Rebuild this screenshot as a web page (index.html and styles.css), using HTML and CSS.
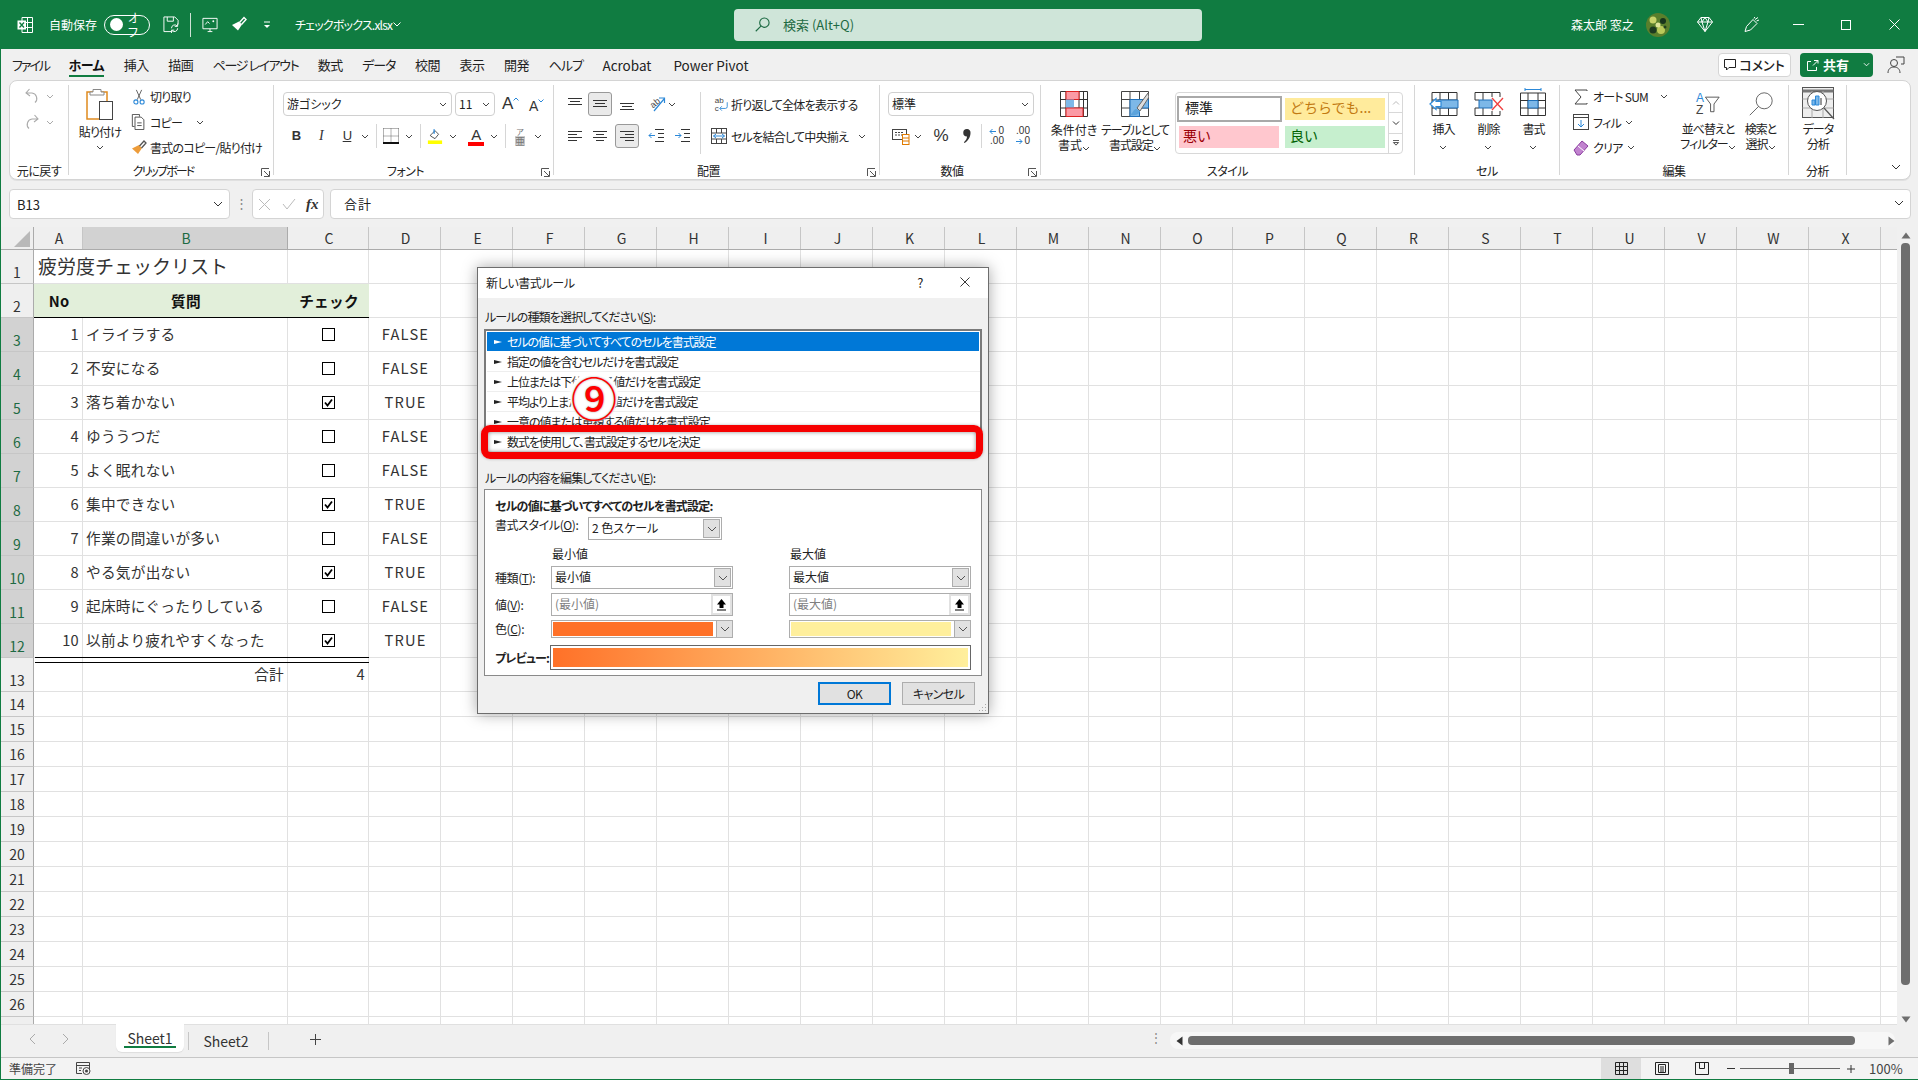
FILE: index.html
```html
<!DOCTYPE html>
<html lang="ja">
<head>
<meta charset="utf-8">
<title>チェックボックス.xlsx - Excel</title>
<link rel="stylesheet" href="styles.css">
</head>
<body>
<svg class="sprite" aria-hidden="true">
  <symbol id="chev" viewBox="0 0 8 5"><path d="M1 1l3 3 3-3" fill="none" stroke="currentColor" stroke-width="1"/></symbol>
  <symbol id="launch" viewBox="0 0 9 9"><path d="M.5 8V.5H8M8.500 8.500H3M8.500 8.500V3M3 3l5 5" fill="none" stroke="#555" stroke-width="1"/></symbol>
  <symbol id="up-btn" viewBox="0 0 11 13"><path d="M5.500 1L10 6.500H7.500V10h-4V6.500H1z" fill="#000"/><path d="M1 12h9" stroke="#000"/></symbol>
  <symbol id="combo" viewBox="0 0 10 6"><path d="M1 1l4 4 4-4" fill="none" stroke="#555"/></symbol>
  <symbol id="chk" viewBox="0 0 13 13"><rect x=".5" y=".5" width="12" height="12" fill="#fff" stroke="#000"/></symbol>
  <symbol id="chkd" viewBox="0 0 13 13"><rect x=".5" y=".5" width="12" height="12" fill="#fff" stroke="#000"/><path d="M3 6.500l2.500 3L10 3.500" fill="none" stroke="#000" stroke-width="1.800"/></symbol>
</svg>

<div class="app">
  <header class="titlebar">
    <svg class="xl-logo" viewBox="0 0 16 16"><path d="M5 .5h10.500v15H5z" fill="none" stroke="#fff"/><path d="M5 5.500h10.500M5 10.500h10.500M10.500 .5v15" stroke="#fff"/><rect x=".5" y="3.500" width="8.500" height="9" fill="#fff"/><path d="M2.500 5.500l4.500 5M7 5.500l-4.500 5" stroke="#107c41" stroke-width="1.300"/></svg>
    <span class="tb-text autosave">自動保存</span>
    <span class="toggle"><span class="toggle-knob"></span><span class="toggle-text">オフ</span></span>
    <svg class="tb-ic save" viewBox="0 0 16 18"><path d="M.5 1h11.500l3.500 3.500V9M.5 1v15.500H8M4 1v4.500h6.500V1" fill="none" stroke="#fff"/><path d="M8.500 13a3.500 3.500 0 0 1 6-2.500M15 13a3.500 3.500 0 0 1-6 2.500" fill="none" stroke="#fff"/><path d="M15 8v3h-3M8.500 18v-3h3" fill="none" stroke="#fff"/></svg>
    <span class="tb-sep"></span>
    <svg class="tb-ic touch" viewBox="0 0 16 18"><path d="M.5 2.500h15v11H.5zM5.500 16.500h5M8 13.500v3" fill="none" stroke="#fff"/><path d="M3 9l2.500-3 2 2" fill="none" stroke="#fff"/><circle cx="11.500" cy="5.500" r="1" fill="#fff"/></svg>
    <svg class="tb-ic brush" viewBox="0 0 16 16"><path d="M1 8.500L7 14l4-6-3-3z" fill="#fff"/><path d="M8.500 6l4.500-5 2 2-4.500 5" fill="none" stroke="#fff" stroke-width="1.400"/></svg>
    <svg class="tb-qat" viewBox="0 0 8 8"><path d="M1 1h6" stroke="#fff"/><path d="M1 4l3 3 3-3z" fill="#fff"/></svg>
    <span class="tb-text filename">チェックボックス.xlsx</span>
    <svg class="tb-chev" viewBox="0 0 8 5"><path d="M.5 .5L4 4 7.500 .5" fill="none" stroke="#fff"/></svg>
    <div class="search">
      <svg class="search-ic" viewBox="0 0 16 16"><circle cx="10" cy="6" r="5" fill="none" stroke="#1d6a43" stroke-width="1.200"/><path d="M6.300 9.700L.8 15.200" stroke="#1d6a43" stroke-width="1.200"/></svg>
      <span>検索 (Alt+Q)</span>
    </div>
    <span class="tb-text username">森太郎 窓之</span>
    <svg class="avatar" viewBox="0 0 24 24"><circle cx="12" cy="12" r="12" fill="#5a7f2c"/><circle cx="7" cy="7" r="3.500" fill="#c8d36a"/><circle cx="17" cy="8" r="3" fill="#18351c"/><circle cx="15" cy="17" r="4" fill="#b9c95a"/><circle cx="7" cy="17" r="3.500" fill="#1d3a20"/><circle cx="12" cy="12" r="2.500" fill="#dfe59a"/><circle cx="19" cy="14" r="1.500" fill="#20401f"/></svg>
    <svg class="tb-ic diamond" viewBox="0 0 16 16"><path d="M4 1h8l3.500 4.500L8 15 .5 5.500zM.5 5.500h15M5 5.500L8 15l3-9.500M4 1l1 4.500L8 1l3 4.500L12 1" fill="none" stroke="#fff"/></svg>
    <svg class="tb-ic pen" viewBox="0 0 16 16"><path d="M1 15l1.500-5L9 3l4 4-6.500 6.500zM10 2l.8-1.500M12.500 4.500L15 3.500M11 3l3-2" fill="none" stroke="#fff"/></svg>
    <svg class="win-min" viewBox="0 0 11 1"><path d="M0 .5h11" stroke="#fff"/></svg>
    <svg class="win-max" viewBox="0 0 10 10"><rect x=".5" y=".5" width="9" height="9" fill="none" stroke="#fff"/></svg>
    <svg class="win-close" viewBox="0 0 11 11"><path d="M.5 .5l10 10M10.500 .5l-10 10" stroke="#fff"/></svg>
  </header>

  <nav class="tabs">
    <span class="tab kana file">ファイル</span>
    <span class="tab active">ホーム</span>
    <span class="tab">挿入</span>
    <span class="tab">描画</span>
    <span class="tab kana page">ページ レイアウト</span>
    <span class="tab">数式</span>
    <span class="tab kana">データ</span>
    <span class="tab">校閲</span>
    <span class="tab">表示</span>
    <span class="tab">開発</span>
    <span class="tab kana">ヘルプ</span>
    <span class="tab lat">Acrobat</span>
    <span class="tab lat">Power Pivot</span>
    <span class="btn-comment"><svg viewBox="0 0 12 12"><path d="M.5 .5h11v8H5L2.500 11V8.500h-2z" fill="none" stroke="#222"/></svg>コメント</span>
    <span class="btn-share"><svg viewBox="0 0 12 12"><path d="M7 1.500h4v3M11 1.500L6 6.500M4 2.500H.5v9h9V8" fill="none" stroke="#fff"/></svg>共有<svg class="share-chev" viewBox="0 0 8 5"><path d="M1 1l3 3 3-3" fill="none" stroke="#fff"/></svg></span>
    <svg class="person" viewBox="0 0 18 18"><circle cx="7" cy="7" r="3.500" fill="none" stroke="#444"/><path d="M1 17c0-4 2.500-6 6-6s6 2 6 6" fill="none" stroke="#444"/><path d="M9 1h8v7h-3" fill="none" stroke="#444"/></svg>
  </nav>

  <section class="ribbon">
    <div class="group g-undo">
      <div class="g-body col">
        <div class="row undo-row">
          <svg class="i14" viewBox="0 0 14 16"><path d="M4.500 1L1 5l4 3M1 5h6a5.500 5.500 0 0 1 3 9.500" fill="none" stroke="#aaa" stroke-width="1.100"/></svg>
          <svg class="chev8 ml7 dim"><use href="#chev"/></svg>
        </div>
        <div class="row undo-row">
          <svg class="i14" viewBox="0 0 14 16"><path d="M9.500 1L13 5 9 8M13 5H7a5.500 5.500 0 0 0-3 9.500" fill="none" stroke="#aaa" stroke-width="1.100"/></svg>
          <svg class="chev8 ml7 dim"><use href="#chev"/></svg>
        </div>
      </div>
      <div class="g-label">元に戻す</div>
    </div>

    <div class="group g-clip">
      <div class="g-body">
        <div class="paste">
          <svg class="paste-ic" viewBox="0 0 28 32"><rect x="1" y="4" width="20" height="27" fill="#fff" stroke="#e08a1e" stroke-width="1.500"/><path d="M7 4V1.500h8V4h3v3H4V4z" fill="#fff" stroke="#888"/><rect x="13.500" y="13.500" width="13" height="18" fill="#fff" stroke="#444"/></svg>
          <span class="paste-label">貼り付け</span>
          <svg class="chev8 paste-chev"><use href="#chev"/></svg>
        </div>
        <div class="clip-list">
          <div class="row clip-row"><svg class="i16" viewBox="0 0 16 18"><path d="M5 1l5 11M11 1L6 12" fill="none" stroke="#555"/><circle cx="4.500" cy="14.500" r="2.300" fill="none" stroke="#2b88d8" stroke-width="1.200"/><circle cx="11.500" cy="14.500" r="2.300" fill="none" stroke="#2b88d8" stroke-width="1.200"/></svg><span class="ml3">切り取り</span></div>
          <div class="row clip-row"><svg class="i16" viewBox="0 0 16 18"><path d="M3 14H.5V.5h8V3" fill="none" stroke="#444"/><path d="M3.500 3.500h7l3 3v11h-10zM6 10h5M6 13h5" fill="none" stroke="#444"/></svg><span class="ml3">コピー</span><svg class="chev8 ml14"><use href="#chev"/></svg></div>
          <div class="row clip-row"><svg class="i16" viewBox="0 0 16 16"><path d="M1 8.500L7 14l4-6-3-3z" fill="#ed9c3a"/><path d="M8.500 6l4.500-5 2 2-4.500 5" fill="none" stroke="#555" stroke-width="1.300"/></svg><span class="ml3">書式のコピー/貼り付け</span></div>
        </div>
      </div>
      <div class="g-label launchable tight">クリップボード<svg class="launch"><use href="#launch"/></svg></div>
    </div>

    <div class="group g-font">
      <div class="g-body col">
        <div class="row rb-row1 pl9">
          <div class="select w169"><span>游ゴシック</span><svg class="chev8"><use href="#chev"/></svg></div>
          <div class="select w40 ml3"><span>11</span><svg class="chev8"><use href="#chev"/></svg></div>
          <span class="grow-a ml7">A<svg viewBox="0 0 6 4"><path d="M.5 3.500L3 1l2.500 2.500" fill="none" stroke="#2b88d8"/></svg></span>
          <span class="grow-a small ml11">A<svg viewBox="0 0 6 4"><path d="M.5 .5L3 3l2.500-2.500" fill="none" stroke="#2b88d8"/></svg></span>
        </div>
        <div class="row rb-row2 pl9">
          <b class="fmt ml7">B</b>
          <i class="fmt ml13">I</i>
          <u class="fmt ml14">U</u>
          <svg class="chev8 ml8"><use href="#chev"/></svg>
          <span class="vsep ml7"></span>
          <svg class="i16 ml6" viewBox="0 0 16 16"><path d="M.5 .5h15M.5 8h15M.5 .5v15M8 .5v15M15.500 .5v15" stroke="#666" stroke-dasharray="1 1" fill="none"/><path d="M0 15h16" stroke="#111" stroke-width="2"/></svg>
          <svg class="chev8 ml6"><use href="#chev"/></svg>
          <span class="vsep ml7"></span>
          <svg class="i16 ml6" viewBox="0 0 16 18"><path d="M3 8l5-5 4 4-4 5-5-3z" fill="none" stroke="#444"/><path d="M7 1.500v5" stroke="#2b88d8" stroke-width="1.500"/><rect y="14" width="16" height="4" fill="#ffff00"/></svg>
          <svg class="chev8 ml6"><use href="#chev"/></svg>
          <span class="color-a ml11">A</span>
          <svg class="chev8 ml6"><use href="#chev"/></svg>
          <span class="vsep ml7"></span>
          <span class="phon ml9">ア<em>亜</em></span>
          <svg class="chev8 ml9"><use href="#chev"/></svg>
        </div>
      </div>
      <div class="g-label launchable">フォント<svg class="launch"><use href="#launch"/></svg></div>
    </div>

    <div class="group g-align">
      <div class="g-body col">
        <div class="row rb-row1 pl9">
          <span class="tbtn"><svg class="i14" viewBox="0 0 14 14"><path d="M0 1.500h14M2 4.500h10M0 7.500h14" stroke="#333"/></svg></span>
          <span class="tbtn on ml1"><svg class="i14" viewBox="0 0 14 14"><path d="M0 3.500h14M2 6.500h10M0 9.500h14" stroke="#333"/></svg></span>
          <span class="tbtn ml3"><svg class="i14" viewBox="0 0 14 14"><path d="M0 6.500h14M2 9.500h10M0 12.500h14" stroke="#333"/></svg></span>
          <svg class="i18 ml10" viewBox="0 0 18 18"><text x="1" y="11" class="svg-ab" transform="rotate(-40 6 8)">ab</text><path d="M5 16L15 4M10 3h5.500v5" fill="none" stroke="#2b88d8" stroke-width="1.200"/></svg>
          <svg class="chev8 ml1"><use href="#chev"/></svg>
          <span class="vsep tall ml24"></span>
          <svg class="i16 ml12" viewBox="0 0 16 18"><text x="1" y="8" class="svg-ab">ab</text><text x="1" y="17" class="svg-ab">c</text><path d="M15 7v5a2 2 0 0 1-2 2H7M9 11.500L6.500 14 9 16.500" fill="none" stroke="#2b88d8"/></svg>
          <span class="ml2">折り返して全体を表示する</span>
        </div>
        <div class="row rb-row2 pl9">
          <span class="tbtn"><svg class="i14" viewBox="0 0 14 14"><path d="M0 2.500h14M0 5.500h9M0 8.500h14M0 11.500h9" stroke="#333"/></svg></span>
          <span class="tbtn ml1"><svg class="i14" viewBox="0 0 14 14"><path d="M0 2.500h14M3 5.500h8M0 8.500h14M3 11.500h8" stroke="#333"/></svg></span>
          <span class="tbtn on ml3"><svg class="i14" viewBox="0 0 14 14"><path d="M0 2.500h14M5 5.500h9M0 8.500h14M5 11.500h9" stroke="#333"/></svg></span>
          <svg class="i16 ml9" viewBox="0 0 16 14"><path d="M7 .5h9M10 4.500h6M10 8.500h6M7 12.500h9" stroke="#333"/><path d="M7 6.500H1M3.500 4L1 6.500 3.500 9" fill="none" stroke="#2b88d8"/></svg>
          <svg class="i16 ml10" viewBox="0 0 16 14"><path d="M7 .5h9M10 4.500h6M10 8.500h6M7 12.500h9" stroke="#333"/><path d="M1 6.500h6M4.500 4L7 6.500 4.500 9" fill="none" stroke="#2b88d8"/></svg>
          <span class="vspace ml10"></span>
          <svg class="i16 ml10" viewBox="0 0 16 16"><rect x=".5" y=".5" width="15" height="15" fill="none" stroke="#444"/><path d="M.5 5h15M.5 11h15M5.500 .5V5M10.500 .5V5M5.500 11v4.500M10.500 11v4.500" stroke="#444"/><path d="M2.500 8h11M5 6l-2.500 2L5 10M11 6l2.500 2L11 10" fill="none" stroke="#2b88d8"/></svg>
          <span class="ml4 w116">セルを結合して中央揃え</span>
          <svg class="chev8 ml11"><use href="#chev"/></svg>
        </div>
      </div>
      <div class="g-label launchable">配置<svg class="launch"><use href="#launch"/></svg></div>
    </div>

    <div class="group g-num">
      <div class="g-body col">
        <div class="row rb-row1 pl8">
          <div class="select w146"><span>標準</span><svg class="chev8"><use href="#chev"/></svg></div>
        </div>
        <div class="row rb-row2 pl8">
          <svg class="i18 ml4" viewBox="0 0 18 18"><rect x=".5" y="2.500" width="14" height="10" fill="none" stroke="#444"/><path d="M3 5.500h9M3 8h9" stroke="#444" stroke-dasharray="2 1"/><rect x="10.500" y="7.500" width="6.500" height="10" fill="#fff" stroke="#e07b00"/><path d="M11 11h6M11 14h6" stroke="#e07b00"/></svg>
          <svg class="chev8 ml4"><use href="#chev"/></svg>
          <span class="pct ml9">%</span>
          <svg class="comma ml11" viewBox="0 0 10 16"><path d="M5 1a3.500 3.500 0 0 1 3.500 4C8.500 9 6 13 2.500 15l-.6-.8C4 12.500 5 10.500 5 8.500A3.700 3.700 0 1 1 5 1z" fill="#333"/></svg>
          <span class="vsep ml9"></span>
          <span class="dec ml6"><span class="dec-row"><svg viewBox="0 0 8 7"><path d="M7 3.500H1M3.500 1L1 3.500 3.500 6" fill="none" stroke="#2b88d8"/></svg>0</span><span class="dec-row">.00</span></span>
          <span class="dec ml10"><span class="dec-row">.00</span><span class="dec-row"><svg viewBox="0 0 8 7"><path d="M1 3.500h6M4.500 1L7 3.500 4.500 6" fill="none" stroke="#2b88d8"/></svg>0</span></span>
        </div>
      </div>
      <div class="g-label launchable">数値<svg class="launch"><use href="#launch"/></svg></div>
    </div>

    <div class="group g-style">
      <div class="g-body">
        <div class="big w60 ml3">
          <svg class="big-ic" viewBox="0 0 28 26"><path d="M.5 .5h27v25H.5zM.5 8.500h27M.5 17h27M6 .5v25M19 .5v25M23.500 .5v25" fill="none" stroke="#333"/><path d="M6 .5h13v8H6z" fill="#fb9aa5" stroke="#d22"/><path d="M6 8.500h8V17H6z" fill="#7db8e8"/><path d="M6 17h17v8.500H6z" fill="#fb9aa5" stroke="#d22"/></svg>
          <span class="big-label">条件付き<br>書式<svg class="chev8"><use href="#chev"/></svg></span>
        </div>
        <div class="big w62">
          <svg class="big-ic" viewBox="0 0 28 26"><path d="M.5 .5h27v25H.5zM.5 8.500h27M.5 17h27M9 .5v25M18.500 .5v25" fill="none" stroke="#444"/><path d="M9 8.500h18.500V17H18.500v8.500H9z" fill="#7db8e8" stroke="#1e6fb8"/><path d="M27 2L16 17l3 3L28 6z" fill="#ddd" stroke="#666"/><path d="M15 18c-3 1-3 4-6 6 4 1 9 0 10-4z" fill="#5ba3dc"/></svg>
          <span class="big-label">テーブルとして<br>書式設定<svg class="chev8"><use href="#chev"/></svg></span>
        </div>
        <div class="gallery ml9">
          <div class="cells">
            <span class="cstyle normal">標準</span>
            <span class="cstyle neutral">どちらでも...</span>
            <span class="cstyle bad">悪い</span>
            <span class="cstyle good">良い</span>
          </div>
          <div class="gal-btns">
            <span class="gal-btn"><svg viewBox="0 0 8 5"><path d="M1 4l3-3 3 3" fill="none" stroke="#bbb"/></svg></span>
            <span class="gal-btn"><svg viewBox="0 0 8 5"><path d="M1 1l3 3 3-3" fill="none" stroke="#333"/></svg></span>
            <span class="gal-btn"><svg viewBox="0 0 8 7"><path d="M.5 .5h7M1 3l3 3 3-3z" fill="none" stroke="#333"/></svg></span>
          </div>
        </div>
      </div>
      <div class="g-label">スタイル</div>
    </div>

    <div class="group g-cells">
      <div class="g-body">
        <div class="big w45 ml6">
          <svg class="big-ic w30" viewBox="0 0 30 24"><path d="M3 .5h25v23H3zM3 8h25M3 16h25M11 .5v23M19.500 .5v23" fill="none" stroke="#333"/><path d="M9 8h20v8H9z" fill="#7db8e8" stroke="#1e6fb8"/><path d="M1 12l6-5.500V9.500h5v5H7v3z" fill="#fff" stroke="#2b88d8" stroke-width="1.200"/></svg>
          <span class="big-label">挿入<br><svg class="chev8"><use href="#chev"/></svg></span>
        </div>
        <div class="big w45">
          <svg class="big-ic w30" viewBox="0 0 30 24"><path d="M1 .5h25V5M26 19v4.500H1V16h4M1 .5V8h4M9 .5V8M9 16v7.500M18 .5V5M18 19v4.500" fill="none" stroke="#333"/><path d="M5 8h13v8H5z" fill="#7db8e8" stroke="#1e6fb8"/><path d="M18 6l11 12M29 6L18 18" stroke="#f04040" stroke-width="1.300"/></svg>
          <span class="big-label">削除<br><svg class="chev8"><use href="#chev"/></svg></span>
        </div>
        <div class="big w45">
          <svg class="big-ic w30 tall-ic" viewBox="0 0 30 28"><path d="M6 1.500h16M6 0v3M22 0v3" stroke="#2b88d8"/><path d="M1.500 5h25v22.500h-25zM1.500 12.500h25M1.500 20h25M9 5v22.500M19 5v22.500" fill="none" stroke="#333"/><path d="M9 12.500h10V20H9z" fill="#7db8e8" stroke="#1e6fb8"/></svg>
          <span class="big-label">書式<br><svg class="chev8"><use href="#chev"/></svg></span>
        </div>
      </div>
      <div class="g-label">セル</div>
    </div>

    <div class="group g-edit">
      <div class="g-body">
        <div class="clip-list edit-list">
          <div class="row clip-row"><svg class="i16" viewBox="0 0 16 16"><path d="M14 2V1H2l6 7-6 7h12v-1" fill="none" stroke="#444"/></svg><span class="ml4">オート SUM</span><svg class="chev8 ml12"><use href="#chev"/></svg></div>
          <div class="row clip-row"><svg class="i16" viewBox="0 0 16 16"><rect x=".5" y=".5" width="15" height="15" fill="none" stroke="#444"/><path d="M.5 3.500h15" stroke="#444"/><path d="M8 6v7M5 10l3 3 3-3" fill="none" stroke="#2b88d8"/></svg><span class="ml4">フィル</span><svg class="chev8 ml4"><use href="#chev"/></svg></div>
          <div class="row clip-row"><svg class="i16" viewBox="0 0 16 16"><path d="M1 10l8-9 6 5-8 9H4z" fill="#c183cf" stroke="#8a3c9e"/><path d="M5 6l6 5" stroke="#fff"/></svg><span class="ml4">クリア</span><svg class="chev8 ml4"><use href="#chev"/></svg></div>
        </div>
        <div class="big w70">
          <svg class="big-ic w30" viewBox="0 0 30 28"><text x="1" y="12" class="svg-az blue">A</text><text x="1" y="26" class="svg-az">Z</text><path d="M12 6h16l-6 8v9h-4v-9z" fill="none" stroke="#444"/></svg>
          <span class="big-label">並べ替えと<br>フィルター<svg class="chev8"><use href="#chev"/></svg></span>
        </div>
        <div class="big w35">
          <svg class="big-ic w30" viewBox="0 0 30 30"><circle cx="19" cy="11" r="10" fill="none" stroke="#444"/><path d="M12 18L1 29" stroke="#444"/></svg>
          <span class="big-label">検索と<br>選択<svg class="chev8"><use href="#chev"/></svg></span>
        </div>
      </div>
      <div class="g-label">編集</div>
    </div>

    <div class="group g-data">
      <div class="g-body">
        <div class="big w58">
          <svg class="big-ic data-ic" viewBox="0 0 33 34"><rect x=".5" y=".5" width="31" height="30" fill="#eee" stroke="#555"/><path d="M.5 4h31" stroke="#777" stroke-width="3"/><path d="M.5 12h31M.5 21h31M10 4v27M21 4v27" stroke="#aaa"/><circle cx="15" cy="14" r="9.500" fill="#fff" stroke="#555"/><path d="M10 18v-5h3v5zM13.500 18V9H17v9z" fill="#7db8e8" stroke="#2b88d8"/><path d="M18 18v-7h2v7z" fill="#999"/><path d="M22 21l10 11" stroke="#555" stroke-width="1.200"/></svg>
          <span class="big-label">データ<br>分析</span>
        </div>
      </div>
      <div class="g-label">分析</div>
    </div>

    <svg class="collapse" viewBox="0 0 10 6"><path d="M1 1l4 4 4-4" fill="none" stroke="#333"/></svg>
  </section>

  <section class="formula">
    <div class="namebox"><span>B13</span><svg class="chev10" viewBox="0 0 10 6"><path d="M1 1l4 4 4-4" fill="none" stroke="#333"/></svg></div>
    <span class="dots">⋮</span>
    <div class="fx-btns">
      <svg class="fx-x" viewBox="0 0 13 13"><path d="M1 1l11 11M12 1L1 12" stroke="#bbb"/></svg>
      <svg class="fx-c" viewBox="0 0 14 12"><path d="M1 6l4 5 8-10" fill="none" stroke="#bbb"/></svg>
      <i class="fx">fx</i>
    </div>
    <div class="fx-input"><span>合計</span><svg class="chev10" viewBox="0 0 10 6"><path d="M1 1l4 4 4-4" fill="none" stroke="#333"/></svg></div>
  </section>

  <main class="workbook">
    <div class="sheet">
      <div class="colhead">
        <div class="corner"><svg viewBox="0 0 16 16"><path d="M16 0v16H0z" fill="#b9b9b9"/></svg></div>
        <span class="ch w49">A</span><span class="ch w205 sel">B</span><span class="ch w81">C</span><span class="ch w72">D</span>
        <span class="ch w72">E</span><span class="ch w72">F</span><span class="ch w72">G</span><span class="ch w72">H</span><span class="ch w72">I</span><span class="ch w72">J</span><span class="ch w72">K</span><span class="ch w72">L</span><span class="ch w72">M</span><span class="ch w72">N</span><span class="ch w72">O</span><span class="ch w72">P</span><span class="ch w72">Q</span><span class="ch w72">R</span><span class="ch w72">S</span><span class="ch w72">T</span><span class="ch w72">U</span><span class="ch w72">V</span><span class="ch w72">W</span><span class="ch w72">X</span>
      </div>
      <div class="grid">
        <div class="r r-title"><span class="rh">1</span><span class="c title">疲労度チェックリスト</span><span class="c"></span><span class="c"></span></div>
        <div class="r"><span class="rh">2</span><span class="c hd">No</span><span class="c hd">質問</span><span class="c hd">チェック</span><span class="c"></span></div>
        <div class="r"><span class="rh s">3</span><span class="c num">1</span><span class="c">イライラする</span><span class="c box"><svg class="cb"><use href="#chk"/></svg></span><span class="c val">FALSE</span></div>
        <div class="r"><span class="rh s">4</span><span class="c num">2</span><span class="c">不安になる</span><span class="c box"><svg class="cb"><use href="#chk"/></svg></span><span class="c val">FALSE</span></div>
        <div class="r"><span class="rh s">5</span><span class="c num">3</span><span class="c">落ち着かない</span><span class="c box"><svg class="cb"><use href="#chkd"/></svg></span><span class="c val">TRUE</span></div>
        <div class="r"><span class="rh s">6</span><span class="c num">4</span><span class="c">ゆううつだ</span><span class="c box"><svg class="cb"><use href="#chk"/></svg></span><span class="c val">FALSE</span></div>
        <div class="r"><span class="rh s">7</span><span class="c num">5</span><span class="c">よく眠れない</span><span class="c box"><svg class="cb"><use href="#chk"/></svg></span><span class="c val">FALSE</span></div>
        <div class="r"><span class="rh s">8</span><span class="c num">6</span><span class="c">集中できない</span><span class="c box"><svg class="cb"><use href="#chkd"/></svg></span><span class="c val">TRUE</span></div>
        <div class="r"><span class="rh s">9</span><span class="c num">7</span><span class="c">作業の間違いが多い</span><span class="c box"><svg class="cb"><use href="#chk"/></svg></span><span class="c val">FALSE</span></div>
        <div class="r"><span class="rh s">10</span><span class="c num">8</span><span class="c">やる気が出ない</span><span class="c box"><svg class="cb"><use href="#chkd"/></svg></span><span class="c val">TRUE</span></div>
        <div class="r"><span class="rh s">11</span><span class="c num">9</span><span class="c">起床時にぐったりしている</span><span class="c box"><svg class="cb"><use href="#chk"/></svg></span><span class="c val">FALSE</span></div>
        <div class="r"><span class="rh s">12</span><span class="c num">10</span><span class="c">以前より疲れやすくなった</span><span class="c box"><svg class="cb"><use href="#chkd"/></svg></span><span class="c val">TRUE</span></div>
        <div class="r total"><span class="rh">13</span><span class="c"></span><span class="c right">合計</span><span class="c num">4</span><span class="c"></span></div>
        <div class="r low"><span class="rh">14</span><span class="c"></span><span class="c"></span><span class="c"></span><span class="c"></span></div>
        <div class="r low"><span class="rh">15</span><span class="c"></span><span class="c"></span><span class="c"></span><span class="c"></span></div>
        <div class="r low"><span class="rh">16</span><span class="c"></span><span class="c"></span><span class="c"></span><span class="c"></span></div>
        <div class="r low"><span class="rh">17</span><span class="c"></span><span class="c"></span><span class="c"></span><span class="c"></span></div>
        <div class="r low"><span class="rh">18</span><span class="c"></span><span class="c"></span><span class="c"></span><span class="c"></span></div>
        <div class="r low"><span class="rh">19</span><span class="c"></span><span class="c"></span><span class="c"></span><span class="c"></span></div>
        <div class="r low"><span class="rh">20</span><span class="c"></span><span class="c"></span><span class="c"></span><span class="c"></span></div>
        <div class="r low"><span class="rh">21</span><span class="c"></span><span class="c"></span><span class="c"></span><span class="c"></span></div>
        <div class="r low"><span class="rh">22</span><span class="c"></span><span class="c"></span><span class="c"></span><span class="c"></span></div>
        <div class="r low"><span class="rh">23</span><span class="c"></span><span class="c"></span><span class="c"></span><span class="c"></span></div>
        <div class="r low"><span class="rh">24</span><span class="c"></span><span class="c"></span><span class="c"></span><span class="c"></span></div>
        <div class="r low"><span class="rh">25</span><span class="c"></span><span class="c"></span><span class="c"></span><span class="c"></span></div>
        <div class="r low"><span class="rh">26</span><span class="c"></span><span class="c"></span><span class="c"></span><span class="c"></span></div>
        <div class="r low"><span class="rh">27</span><span class="c"></span><span class="c"></span><span class="c"></span><span class="c"></span></div>
      </div>
    </div>
    <div class="vscroll">
      <svg viewBox="0 0 10 7"><path d="M5 .5L9.500 6.500H.5z" fill="#6e6e6e"/></svg>
      <span class="vthumb"></span>
      <svg viewBox="0 0 10 7"><path d="M5 6.500L9.500 .5H.5z" fill="#6e6e6e"/></svg>
    </div>
  </main>

  <footer class="sheetbar">
    <svg class="nav-l" viewBox="0 0 7 12"><path d="M6 1L1 6l5 5" fill="none" stroke="#aaa"/></svg>
    <svg class="nav-r" viewBox="0 0 7 12"><path d="M1 1l5 5-5 5" fill="none" stroke="#aaa"/></svg>
    <span class="stab on"><span>Sheet1</span></span>
    <span class="stab-sep"></span>
    <span class="stab"><span>Sheet2</span></span>
    <span class="stab-sep"></span>
    <svg class="add" viewBox="0 0 11 11"><path d="M5.500 0v11M0 5.500h11" stroke="#444"/></svg>
    <span class="bar-dots">⋮</span>
    <div class="htrack">
      <svg class="hs-l" viewBox="0 0 7 10"><path d="M.5 5L6.500 .5v9z" fill="#333"/></svg>
      <span class="hthumb"></span>
      <svg class="hs-r" viewBox="0 0 7 10"><path d="M6.500 5L.5 .5v9z" fill="#6e6e6e"/></svg>
    </div>
  </footer>

  <footer class="status">
    <span>準備完了</span>
    <svg class="macro" viewBox="0 0 15 13"><path d="M.5 .5h13v10H8M.5 .5v11H6M.5 3.500h13M3 6h3M3 8.500h2" fill="none" stroke="#444"/><circle cx="10.500" cy="9" r="3.500" fill="#f3f3f3" stroke="#444"/><circle cx="10.500" cy="9" r="1.500" fill="#444"/></svg>
    <span class="view on"><svg viewBox="0 0 13 13"><path d="M.5 .5h12v12H.5zM.5 4.500h12M.5 8.500h12M4.500 .5v12M8.500 .5v12" fill="none" stroke="#222"/></svg></span>
    <span class="view v2"><svg viewBox="0 0 14 13"><path d="M.5 .5h13v12H.5z" fill="none" stroke="#222"/><path d="M3.500 2.500h7v8h-7zM5 5h4M5 7h4M5 9h4" fill="none" stroke="#222"/></svg></span>
    <span class="view v3"><svg viewBox="0 0 14 13"><path d="M.5 .5h13v12H.5zM4.500 .5v6h5v-6" fill="none" stroke="#222"/></svg></span>
    <svg class="z-minus" viewBox="0 0 8 1"><path d="M0 .5h8" stroke="#333"/></svg>
    <span class="slider"><span class="slider-thumb"></span></span>
    <svg class="z-plus" viewBox="0 0 8 8"><path d="M0 4h8M4 0v8" stroke="#333"/></svg>
    <span class="zoomval">100%</span>
  </footer>
</div>

<div class="dialog">
  <div class="d-title"><span>新しい書式ルール</span><span class="d-help">?</span><svg class="d-close" viewBox="0 0 11 11"><path d="M.5 .5l10 10M10.500 .5l-10 10" stroke="#222"/></svg></div>
  <div class="d-body">
    <div class="d-label">ルールの種類を選択してください(<u>S</u>):</div>
    <div class="listbox">
      <div class="li sel"><span class="li-mark"></span>セルの値に基づいてすべてのセルを書式設定</div>
      <div class="li"><span class="li-mark"></span>指定の値を含むセルだけを書式設定</div>
      <div class="li"><span class="li-mark"></span>上位または下位に入る値だけを書式設定</div>
      <div class="li"><span class="li-mark"></span>平均より上または下の値だけを書式設定</div>
      <div class="li"><span class="li-mark"></span>一意の値または重複する値だけを書式設定</div>
      <div class="li"><span class="li-mark"></span>数式を使用して、書式設定するセルを決定</div>
    </div>
    <div class="d-label l2">ルールの内容を編集してください(<u>E</u>):</div>
    <div class="editbox">
      <div class="e-bold">セルの値に基づいてすべてのセルを書式設定:</div>
      <div class="e-style"><span class="e-lab w93">書式スタイル(<u>O</u>):</span><span class="combo w134"><span>2 色スケール</span><span class="combo-btn"><svg><use href="#combo"/></svg></span></span></div>
      <div class="e-grid">
        <span></span><span class="e-head">最小値</span><span class="e-head">最大値</span>
        <span class="e-lab">種類(<u>T</u>):</span>
        <span class="combo"><span>最小値</span><span class="combo-btn"><svg><use href="#combo"/></svg></span></span>
        <span class="combo"><span>最大値</span><span class="combo-btn"><svg><use href="#combo"/></svg></span></span>
        <span class="e-lab">値(<u>V</u>):</span>
        <span class="combo"><span class="ph">(最小値)</span><span class="ref-btn"><svg><use href="#up-btn"/></svg></span></span>
        <span class="combo"><span class="ph">(最大値)</span><span class="ref-btn"><svg><use href="#up-btn"/></svg></span></span>
        <span class="e-lab">色(<u>C</u>):</span>
        <span class="combo short"><span class="swatch orange"></span><span class="combo-btn"><svg><use href="#combo"/></svg></span></span>
        <span class="combo short"><span class="swatch yellow"></span><span class="combo-btn"><svg><use href="#combo"/></svg></span></span>
      </div>
      <div class="e-prev"><span class="e-lab bold">プレビュー:</span><span class="prev-box"><span class="prev-fill"></span></span></div>
    </div>
    <div class="d-foot"><span class="d-btn ok">OK</span><span class="d-btn">キャンセル</span></div>
    <svg class="grip" viewBox="0 0 9 9"><path d="M7 1h1v1H7zM4 4h1v1H4zM7 4h1v1H7zM1 7h1v1H1zM4 7h1v1H4zM7 7h1v1H7z" fill="#aaa"/></svg>
  </div>
</div>
<div class="callout-box"></div>
<div class="callout-num"><span>⑨</span></div>
</body>
</html>
```
FILE: styles.css
```css
*{box-sizing:border-box}
html,body{margin:0;padding:0;height:100%;overflow:hidden}
body{width:1918px;height:1080px;background:#f0f0f0;font-family:"Noto Sans CJK JP","Noto Sans",sans-serif;font-size:12px;color:#222;font-feature-settings:"palt";position:relative}
svg{display:block;flex:none}
.sprite{position:absolute;width:0;height:0}
.app{width:1918px;height:1080px;display:flex;flex-direction:column;border-left:1px solid #107c41;border-bottom:1px solid #107c41}

/* title bar */
.titlebar{height:49px;margin-left:-1px;background:#107c41;display:flex;align-items:center;color:#fff;flex:none}
.tb-text{font-size:12px;line-height:16px;white-space:nowrap}
.xl-logo{width:16px;height:16px;margin-left:17px}
.autosave{margin-left:16px;width:48px}
.toggle{width:46px;height:20px;margin-left:7px;border:1px solid #fff;border-radius:10px;display:flex;align-items:center;padding-left:5px}
.toggle-knob{width:13px;height:13px;border-radius:50%;background:#fff}
.toggle-text{font-size:12px;margin-left:5px;line-height:14px}
.tb-ic{width:16px;height:17px}
.save{margin-left:13px}
.tb-sep{width:1px;height:24px;background:#cfe2d6;margin-left:11px}
.touch{margin-left:11px}
.brush{margin-left:13px}
.tb-qat{width:8px;height:8px;margin-left:16px}
.filename{margin-left:24px;width:92px;letter-spacing:-.8px}
.tb-chev{width:8px;height:5px;margin-left:6px}
.search{width:468px;height:32px;margin-left:333px;background:#cfe5d9;border-radius:4px;display:flex;align-items:center;padding-left:21px;color:#1d6a43;font-size:13px;font-feature-settings:normal}
.search-ic{width:15px;height:15px}
.search span{margin-left:13px}
.username{margin-left:369px;width:64px}
.avatar{width:24px;height:24px;margin-left:11px;flex:none}
.diamond{margin-left:27px}
.pen{margin-left:31px}
.win-min{width:11px;height:1px;margin-left:33px}
.win-max{width:10px;height:10px;margin-left:37px}
.win-close{width:11px;height:11px;margin-left:38px}

/* tabs */
.tabs{height:31px;flex:none;display:flex;align-items:center;padding-left:11px;font-size:13px;position:relative}
.tab{margin-right:19.500px;line-height:26px;white-space:nowrap;position:relative;letter-spacing:-.5px}
.tab.kana{letter-spacing:-1px}
.tab.file{letter-spacing:-2px}
.tab.page{letter-spacing:-1.400px}
.tab.lat{letter-spacing:0;font-size:13.500px;margin-right:22px}
.tab.active{font-weight:700;color:#111}
.tab.active::after{content:"";position:absolute;left:0;right:0;bottom:1px;height:2px;background:#107c41}
.btn-comment{margin-left:auto;width:73px;height:24px;border:1px solid #d5d5d5;border-radius:4px;background:#fff;display:flex;align-items:center;justify-content:center;font-size:13px;font-weight:500;flex:none}
.btn-comment svg{width:12px;height:12px;margin-right:3px}
.btn-share{width:73px;height:24px;margin-left:9px;background:#107c41;border-radius:4px;color:#fff;display:flex;align-items:center;padding-left:7px;font-size:13px;font-weight:700;flex:none}
.btn-share svg{width:12px;height:12px;margin-right:4px}
.btn-share .share-chev{width:7px;height:5px;margin:0 0 0 14px}
.person{width:18px;height:18px;margin-left:14px;margin-right:13px}

/* ribbon */
.ribbon{height:100px;flex:none;margin:0 7px 0 8px;background:#fff;border:1px solid #d4d4d4;border-radius:8px;display:flex;box-shadow:0 1px 0 #e0e0e0;position:relative}
.group{height:90px;margin-top:4px;border-right:1px solid #d6d6d6;display:flex;flex-direction:column;flex:none;letter-spacing:-.75px}
.g-undo{width:59px}.g-clip{width:205px}.g-font{width:280px}.g-align{width:326px}.g-num{width:161px}.g-style{width:374px}.g-cells{width:145px}.g-edit{width:229px}.g-data{width:58px}
.g-body{height:78px;display:flex;flex:none}
.g-body.col{flex-direction:column}
.g-label{height:16px;margin-bottom:-4px;line-height:16px;text-align:center;font-size:12px;position:relative;flex:none;letter-spacing:-.5px}
.g-label.launchable{padding-right:16px}
.g-label.tight{letter-spacing:-1.900px}
.launch{position:absolute;right:3px;top:5px;width:9px;height:9px}
.row{display:flex;align-items:center;white-space:nowrap}
.undo-row{height:26px;padding-left:15px}
.undo-row:first-child{margin-top:-2px}
.i14{width:14px;height:16px}
.i16{width:16px;height:16px}
.i18{width:18px;height:18px}
.chev8{width:8px;height:5px;color:#444}
.chev8.dim{color:#aaa}
.ml1{margin-left:1px}.ml2{margin-left:2px}.ml3{margin-left:3px}.ml4{margin-left:4px}.ml6{margin-left:6px}.ml7{margin-left:7px}.ml8{margin-left:8px}.ml9{margin-left:9px}.ml10{margin-left:10px}.ml11{margin-left:11px}.ml12{margin-left:12px}.ml13{margin-left:13px}.ml14{margin-left:14px}.ml24{margin-left:24px}
.pl8{padding-left:8px}.pl9{padding-left:9px}
.paste{width:62px;display:flex;flex-direction:column;align-items:center;flex:none}
.paste-ic{width:28px;height:32px;margin-top:3px}
.paste-label{font-size:12px;line-height:15px;margin-top:4px}
.paste-chev{margin-top:6px}
.clip-list{margin-top:-1px;flex:none}
.clip-row{height:25.500px}
.select{height:24px;background:#fff;border:1px solid #d0d0d0;border-radius:4px;display:flex;align-items:center;justify-content:space-between;padding:0 4px 0 3px;font-size:12px;flex:none;letter-spacing:0}
.select span{padding-bottom:2px}
.w169{width:169px}.w40{width:40px}.w146{width:146px}.w116{width:116px}
.rb-row1{height:24px;margin-top:7px}
.rb-row2{height:24px;margin-top:8px}
.grow-a{font-family:"Liberation Sans",sans-serif;font-size:17px;width:16px;display:flex;align-items:flex-start;color:#333;line-height:20px;letter-spacing:0}
.grow-a.small{font-size:14px;padding-top:3px}
.grow-a svg{width:6px;height:4px;margin-top:3px}
.fmt{width:12px;text-align:center;font-family:"Liberation Serif",serif;font-size:14px;color:#333;line-height:16px;display:block;flex:none}
b.fmt{font-family:"Liberation Sans",sans-serif;font-size:13px}
u.fmt{font-family:"Liberation Sans",sans-serif;font-size:13px}
.vsep{width:1px;height:24px;background:#d6d6d6;flex:none}
.vsep.tall{height:62px;margin-top:38px}
.vspace{width:1px;height:24px;flex:none}
.color-a{width:16px;font-family:"Liberation Sans",sans-serif;font-size:15px;line-height:15px;text-align:center;color:#333;border-bottom:4px solid #f00;flex:none}
.phon{width:10px;font-size:8px;line-height:9px;color:#777;text-align:center;flex:none;letter-spacing:0}
.phon em{display:block;font-style:normal;font-size:10px;background:#ccc}
.tbtn{width:24px;height:24px;display:flex;align-items:center;justify-content:center;border:1px solid transparent;border-radius:3px;flex:none}
.tbtn.on{background:#eaeaea;border-color:#999}
.svg-ab{font:9px "Liberation Sans",sans-serif;fill:#444;letter-spacing:0}
.svg-az{font:14px "Liberation Sans",sans-serif;fill:#444;letter-spacing:0}
.svg-az.blue{fill:#2b88d8}
.pct{width:20px;font-family:"Liberation Sans",sans-serif;font-size:17px;text-align:center;color:#333;line-height:20px;letter-spacing:0}
.comma{width:10px;height:16px}
.dec{width:16px;display:flex;flex-direction:column;align-items:flex-end;font:10px/10px "Liberation Sans",sans-serif;color:#333;letter-spacing:0}
.dec-row{display:flex;align-items:center;gap:1px}
.dec svg{width:8px;height:7px}
.big{display:flex;flex-direction:column;align-items:center;flex:none}
.w60{width:60px}.w62{width:62px}.w45{width:45px}.w70{width:70px}.w35{width:35px}.w58{width:58px}
.big-ic{width:28px;height:26px;margin-top:6px}
.big-ic.w30{width:30px;height:24px;margin-top:7px}
.big-ic.tall-ic{height:28px;margin-top:3px}
.data-ic{width:33px;height:34px;margin-top:2px}
.big-label{font-size:12px;line-height:15px;text-align:center;margin-top:5px;white-space:nowrap;display:block;letter-spacing:-1px}
.w60 .big-label{letter-spacing:0}
.big-label .chev8{display:inline-block;margin-left:3px;vertical-align:middle}
.data-ic + .big-label{margin-top:0}
.big-label br + .chev8{margin:4px 0 0}
.gallery{width:228px;height:62px;margin-top:7px;border:1px solid #d8d8d8;border-radius:4px;display:flex;flex:none;letter-spacing:0}
.cells{width:214px;display:grid;grid-template-columns:105px 100px;grid-template-rows:26px 22px;column-gap:3px;row-gap:4px;padding:3px 0 0 1px}
.cstyle{display:flex;align-items:center;padding:0 0 4px 5px;font-size:14px;font-feature-settings:normal}
.normal{border:2px solid #a9a9a9;background:#fff;padding-left:6px}
.neutral{background:#ffeb9c;color:#c27a12;margin:2px 0}
.bad{background:#ffc7ce;color:#9c0006;margin:0 3px 0 2px;padding-left:4px}
.good{background:#c6efce;color:#006100}
.gal-btns{width:14px;display:flex;flex-direction:column;border-left:1px solid #d8d8d8}
.gal-btn{flex:1;display:flex;align-items:center;justify-content:center;border-bottom:1px solid #d8d8d8}
.gal-btn:last-child{border-bottom:0}
.gal-btn svg{width:8px;height:6px}
.edit-list{width:100px;margin-left:13px}
.collapse{position:absolute;right:9px;bottom:9px;width:10px;height:6px}

/* formula */
.formula{height:30px;flex:none;margin:9px 7px 0 8px;display:flex;align-items:stretch}
.namebox{width:221px;background:#fff;border:1px solid #d4d4d4;border-radius:4px;display:flex;align-items:center;justify-content:space-between;padding:0 6px 0 7px;font-size:13px;flex:none;font-feature-settings:normal}
.chev10{width:10px;height:6px}
.dots{width:22px;text-align:center;color:#888;line-height:28px;font-size:13px;flex:none}
.fx-btns{width:72px;background:#fff;border:1px solid #d4d4d4;border-radius:4px;display:flex;align-items:center;padding-left:5px;flex:none}
.fx-x{width:13px;height:13px}
.fx-c{width:14px;height:12px;margin-left:11px}
.fx{font:italic 700 15px "Liberation Serif",serif;margin-left:10px;color:#333}
.fx-input{flex:1;margin-left:6px;background:#fff;border:1px solid #d4d4d4;border-radius:4px;display:flex;align-items:center;justify-content:space-between;padding:0 6px 2px 13px;font-size:13px;font-feature-settings:normal}
.fx-input span{letter-spacing:1px}

/* sheet */
.workbook{flex:1;min-height:0;display:flex;margin-top:8px;overflow:hidden}
.sheet{width:1896px;flex:none;display:flex;flex-direction:column;background:#fff;overflow:hidden;border-bottom:1px solid #e0e0e0}
.colhead{height:23px;flex:none;display:flex;background:#efefef;border-bottom:1px solid #ababab;font-size:14px;font-feature-settings:normal;color:#333}
.corner{width:33px;flex:none;border-right:1px solid #ababab;display:flex;justify-content:flex-end;align-items:flex-end;padding:0 3px 2px 0;background:#efefef}
.corner svg{width:16px;height:16px}
.ch{flex:none;border-right:1px solid #c6c6c6;text-align:center;line-height:22px;height:22px;padding-left:2px}
.ch.sel{background:#d2d2d2;color:#1d6a43;border-right:1px solid #ababab}
.w49{width:49px}.w205{width:205px}.w81{width:81px}.w72{width:72px}
.grid{flex:1;min-height:0;overflow:hidden;font-size:14.670px;letter-spacing:.25px;font-feature-settings:normal}
.r{display:grid;grid-template-columns:33px 49px 205px 81px 72px 1fr;height:34px;border-bottom:1px solid #e1e1e1;color:#333}
.r::after{content:"";background:repeating-linear-gradient(90deg,transparent 0 71px,#e1e1e1 71px 72px)}
.r.r-title{grid-template-columns:33px 254px 81px 72px 1fr}
.r.low{height:25px}
.rh{background:#efefef;border-right:1px solid #ababab;border-bottom:1px solid #c6c6c6;margin-bottom:-1px;text-align:center;display:flex;align-items:flex-end;justify-content:center;font-size:14px;line-height:22px;color:#333;letter-spacing:0}
.rh.s{background:#d2d2d2;color:#1d6a43}
.r.low .rh{align-items:center}
.c{border-right:1px solid #e1e1e1;padding:0 2px 2px 3px;display:flex;align-items:center;white-space:nowrap;min-width:0}
.title{font-size:19px;padding-left:4px;letter-spacing:0}
.hd{background:#e2efda;font-weight:700;justify-content:center;color:#111;border-right:0;border-bottom:1px solid #000;margin-bottom:-1px;padding-bottom:0}
.num{justify-content:flex-end;padding-right:3px}
.right{justify-content:flex-end;padding-right:3px}
.box{justify-content:center;padding:0}
.cb{width:13px;height:13px}
.val{justify-content:center;letter-spacing:1.200px;padding-left:4px}
.total{position:relative}
.total::before{content:"";position:absolute;left:34px;width:334px;top:-1px;height:4px;border-top:1px solid #000;border-bottom:1px solid #000}
.vscroll{width:21px;flex:none;display:flex;flex-direction:column;align-items:center;padding:5px 5px 0 1px;background:#f0f0f0}
.vscroll svg{width:10px;height:7px}
.vthumb{width:9px;height:742px;margin:4px 0 31px;background:#6e6e6e;border-radius:4px;flex:none}

/* sheet tabs */
.sheetbar{height:32px;flex:none;display:flex;align-items:flex-start;background:#f0f0f0;position:relative}
.nav-l{width:7px;height:12px;margin:8px 0 0 28px}
.nav-r{width:7px;height:12px;margin:8px 0 0 26px}
.stab{width:68px;height:28px;display:flex;align-items:center;justify-content:center;font-size:14px;font-feature-settings:normal;color:#333;position:relative;padding-top:3px;flex:none}
.stab.on{margin-left:47px;margin-top:-1px;background:#fff;border-radius:0 0 6px 6px;box-shadow:0 1px 1px #ddd;padding-top:0}
.stab.on::after{content:"";position:absolute;left:8px;right:8px;bottom:4px;height:2px;background:#107c41}
.stab-sep{width:1px;height:18px;background:#c6c6c6;margin-top:7px;margin-left:4px;flex:none}
.stab-sep + .stab{margin-left:-1px;width:76px}
.add{width:11px;height:11px;margin:9px 0 0 41px}
.bar-dots{margin-left:829px;color:#888;font-size:12px;line-height:24px;width:8px}
.htrack{width:725px;height:17px;margin:7px 0 0 12px;background:#f7f7f7;border-radius:8px;display:flex;align-items:center;padding-left:6px;flex:none}
.hs-l{width:7px;height:10px}
.hthumb{width:667px;height:9px;margin-left:5px;background:#6e6e6e;border-radius:4px;flex:none}
.hs-r{width:7px;height:10px;margin-left:33px}

/* status */
.status{height:22px;flex:none;background:#f3f3f3;border-top:1px solid #c6c6c6;display:flex;align-items:center;padding-left:8px;font-size:12px;color:#444;font-feature-settings:normal}
.macro{width:15px;height:13px;margin-left:19px}
.view{height:21px;display:flex;align-items:center;justify-content:center;flex:none}
.view.on{width:40px;background:#dedede;margin-left:1510px}
.view svg{width:13px;height:13px}
.view.v2{width:14px;margin-left:14px}
.view.v2 svg,.view.v3 svg{width:14px}
.view.v3{width:14px;margin-left:26px}
.z-minus{width:8px;height:1px;margin-left:18px}
.slider{width:100px;height:1px;background:#666;margin-left:5px;position:relative;flex:none}
.slider-thumb{position:absolute;left:49px;top:-5px;width:5px;height:11px;background:#666}
.z-plus{width:8px;height:8px;margin-left:7px}
.zoomval{margin-left:14px;font-size:13px}

/* dialog */
.dialog{position:absolute;left:477px;top:267px;width:512px;height:447px;background:#f0f0f0;border:1px solid #6d6d6d;box-shadow:0 0 14px rgba(0,0,0,.35);display:flex;flex-direction:column;font-size:12px;color:#222}
.d-title{height:30px;flex:none;background:#fff;display:flex;align-items:center;padding:0 0 2px 8px;position:relative;letter-spacing:-.4px}
.d-help{margin-left:auto;font-size:13px}
.d-close{width:10px;height:10px;margin:0 18px 0 37px}
.d-body{flex:1;padding:11px 6px 0 6px;position:relative}
.d-label{line-height:16px;height:16px;margin-left:1px;letter-spacing:-.85px;white-space:nowrap}
.listbox{margin-top:4px;height:125px;border:2px solid #7a7a7a;border-bottom-width:1px;background:#fff;padding:1px 0 0 1px;overflow:hidden}
.li{height:20px;line-height:20px;display:flex;align-items:center;border-bottom:1px solid #eee;white-space:nowrap;font-size:12px;padding-right:1px;letter-spacing:-1.050px}
.li.sel{background:#0078d7;color:#fff;border:0;height:19px;margin:0 1px 1px 0}
.li-mark{width:20px;padding-left:7px;flex:none;display:flex;align-items:center}
.li-mark::before{content:"";width:0;height:0;border-left:8px solid currentColor;border-top:2.500px solid transparent;border-bottom:2.500px solid transparent}
.l2{margin-top:16px}
.editbox{margin-top:3px;height:187px;border:1px solid #8a8a8a;background:#fff;padding:7px 0 0 10px;width:498px}
.e-bold{font-weight:700;line-height:18px;font-size:12px;letter-spacing:-.8px;white-space:nowrap}
.e-style{display:flex;margin-top:2px;height:22px}
.w93{width:93px;flex:none}
.w134{width:134px;height:22px}
.e-lab{line-height:16px;white-space:nowrap;letter-spacing:-.4px}
.e-lab.bold{font-weight:700;letter-spacing:-.8px}
.e-grid{display:grid;grid-template-columns:56px 182px 238px;grid-template-rows:17px 23px 23px 18px;row-gap:4px;margin-top:6px;align-items:stretch}
.e-grid>:nth-child(3n){margin-left:56px}
.e-grid .e-lab{line-height:23px}
.e-grid .e-lab:nth-last-child(3){line-height:18px}
.e-head{padding-left:1px;line-height:17px}
.combo{height:23px;border:1px solid #adadad;background:#fff;display:flex;align-items:center;justify-content:space-between;padding-left:3px;font-size:12px}
.combo>span:first-child:not(.swatch){padding-bottom:2px}
.combo.short{height:18px;padding:1px 0 1px 1px}
.combo-btn{width:17px;height:calc(100% - 2px);background:#e1e1e1;border:1px solid #adadad;display:flex;align-items:center;justify-content:center;flex:none;margin-right:1px}
.combo-btn svg{width:10px;height:6px}
.combo.short .combo-btn{height:18px;margin:-1px -1px -1px 0}
.ref-btn{width:21px;height:100%;background:#fff;border:2px solid #e1e1e1;display:flex;align-items:center;justify-content:center;flex:none}
.ref-btn svg{width:11px;height:13px}
.ph{color:#808080}
.swatch{flex:1;height:100%;margin-right:3px}
.orange{background:#ff7128}
.yellow{background:#ffef9c}
.e-prev{display:flex;margin-top:7px;align-items:center;height:25px}
.e-prev .e-lab{width:55px}
.prev-box{width:421px;height:25px;border:1px solid #666;padding:2px;display:block}
.prev-fill{display:block;height:100%;background:linear-gradient(90deg,#ff7128,#ffef9c)}
.d-foot{display:flex;justify-content:flex-end;gap:11px;margin-top:6px;padding-right:7px}
.d-btn{width:73px;height:23px;background:#e1e1e1;border:1px solid #adadad;display:flex;align-items:center;justify-content:center;font-size:12px;letter-spacing:-.6px}
.d-btn.ok{border:2px solid #0078d7}
.grip{position:absolute;right:1px;bottom:1px;width:9px;height:9px}

.callout-box{position:absolute;left:481px;top:425px;width:502px;height:34px;border:7px solid #f60000;border-radius:9px;box-shadow:inset 0 0 4px rgba(0,0,0,.45),0 0 3px rgba(0,0,0,.3)}
.callout-num{position:absolute;left:570px;top:372px;width:48px;height:48px;border-radius:50%;background:#fff;box-shadow:0 0 5px rgba(255,255,255,.9);display:flex;align-items:center;justify-content:center;color:#f00;font-size:46px;font-weight:500;line-height:48px;font-feature-settings:normal;text-shadow:0 0 2px #999}
```
